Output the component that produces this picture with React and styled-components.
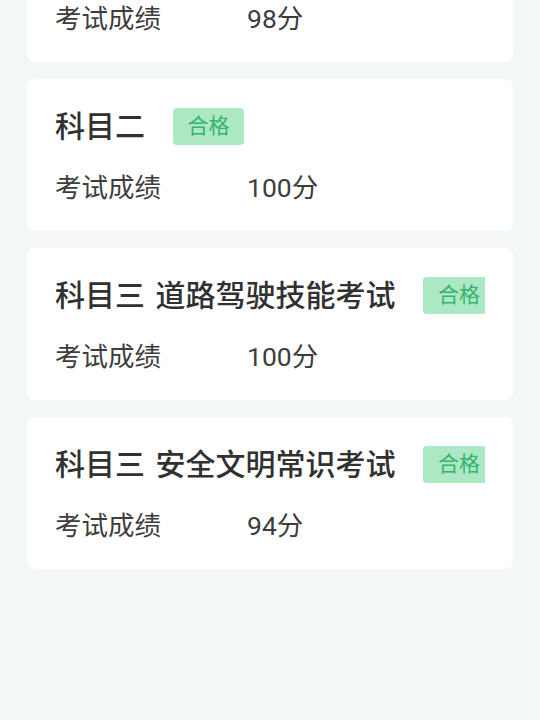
import styled, { createGlobalStyle } from "styled-components";

const GlobalStyle = createGlobalStyle`
    html, body {
        margin: 0;
        padding: 0;
        background-color: #f4f7f8;
        font-family: Roboto, "Noto Sans CJK SC", sans-serif;
    }
    #root {
        height: 720px;
        overflow: hidden;
    }
`;

const Page = styled.div`
    display: flex;
    flex-direction: column;
    gap: 17px;
    padding: 0 27px;
    margin-top: -90px;
`;

const Card = styled.div`
    background-color: #ffffff;
    border-radius: 8px;
    padding: 25px 28px 22px 28px;
    height: 152px;
    box-sizing: border-box;
`;

const Inner = styled.div`
    display: flex;
    flex-direction: column;
    gap: 22px;
    padding: 4px 0;
    overflow: hidden;
`;

const TitleRow = styled.div`
    display: flex;
    flex-direction: row;
    align-items: center;
    gap: 28px;
    height: 37px;
    white-space: nowrap;
`;

const Title = styled.div`
    font-size: 30px;
    font-weight: 500;
    color: #313131;
    line-height: 37px;
    word-spacing: 3px;
`;

const Badge = styled.div`
    flex-shrink: 0;
    width: 71px;
    height: 37px;
    border-radius: 4px;
    background-color: #ade8c5;
    color: #35b36d;
    font-size: 21px;
    line-height: 37px;
    text-align: center;
`;

const ScoreRow = styled.div`
    display: flex;
    flex-direction: row;
    align-items: center;
    height: 36px;
    font-size: 26.5px;
    color: #3d3d3d;
`;

const Label = styled.div`
    width: 192px;
    flex-shrink: 0;
`;

const subjects = [
    { name: "科目一", status: "合格", score: 98 },
    { name: "科目二", status: "合格", score: 100 },
    { name: "科目三 道路驾驶技能考试", status: "合格", score: 100 },
    { name: "科目三 安全文明常识考试", status: "合格", score: 94 },
];

function App() {
    return (
        <>
            <GlobalStyle />
            <Page>
                {subjects.map((s, index) => (
                    <Card key={index}>
                        <Inner>
                            <TitleRow>
                                <Title>{s.name}</Title>
                                <Badge>{s.status}</Badge>
                            </TitleRow>
                            <ScoreRow>
                                <Label>考试成绩</Label>
                                <div>{s.score}分</div>
                            </ScoreRow>
                        </Inner>
                    </Card>
                ))}
            </Page>
        </>
    );
}

export default App;
